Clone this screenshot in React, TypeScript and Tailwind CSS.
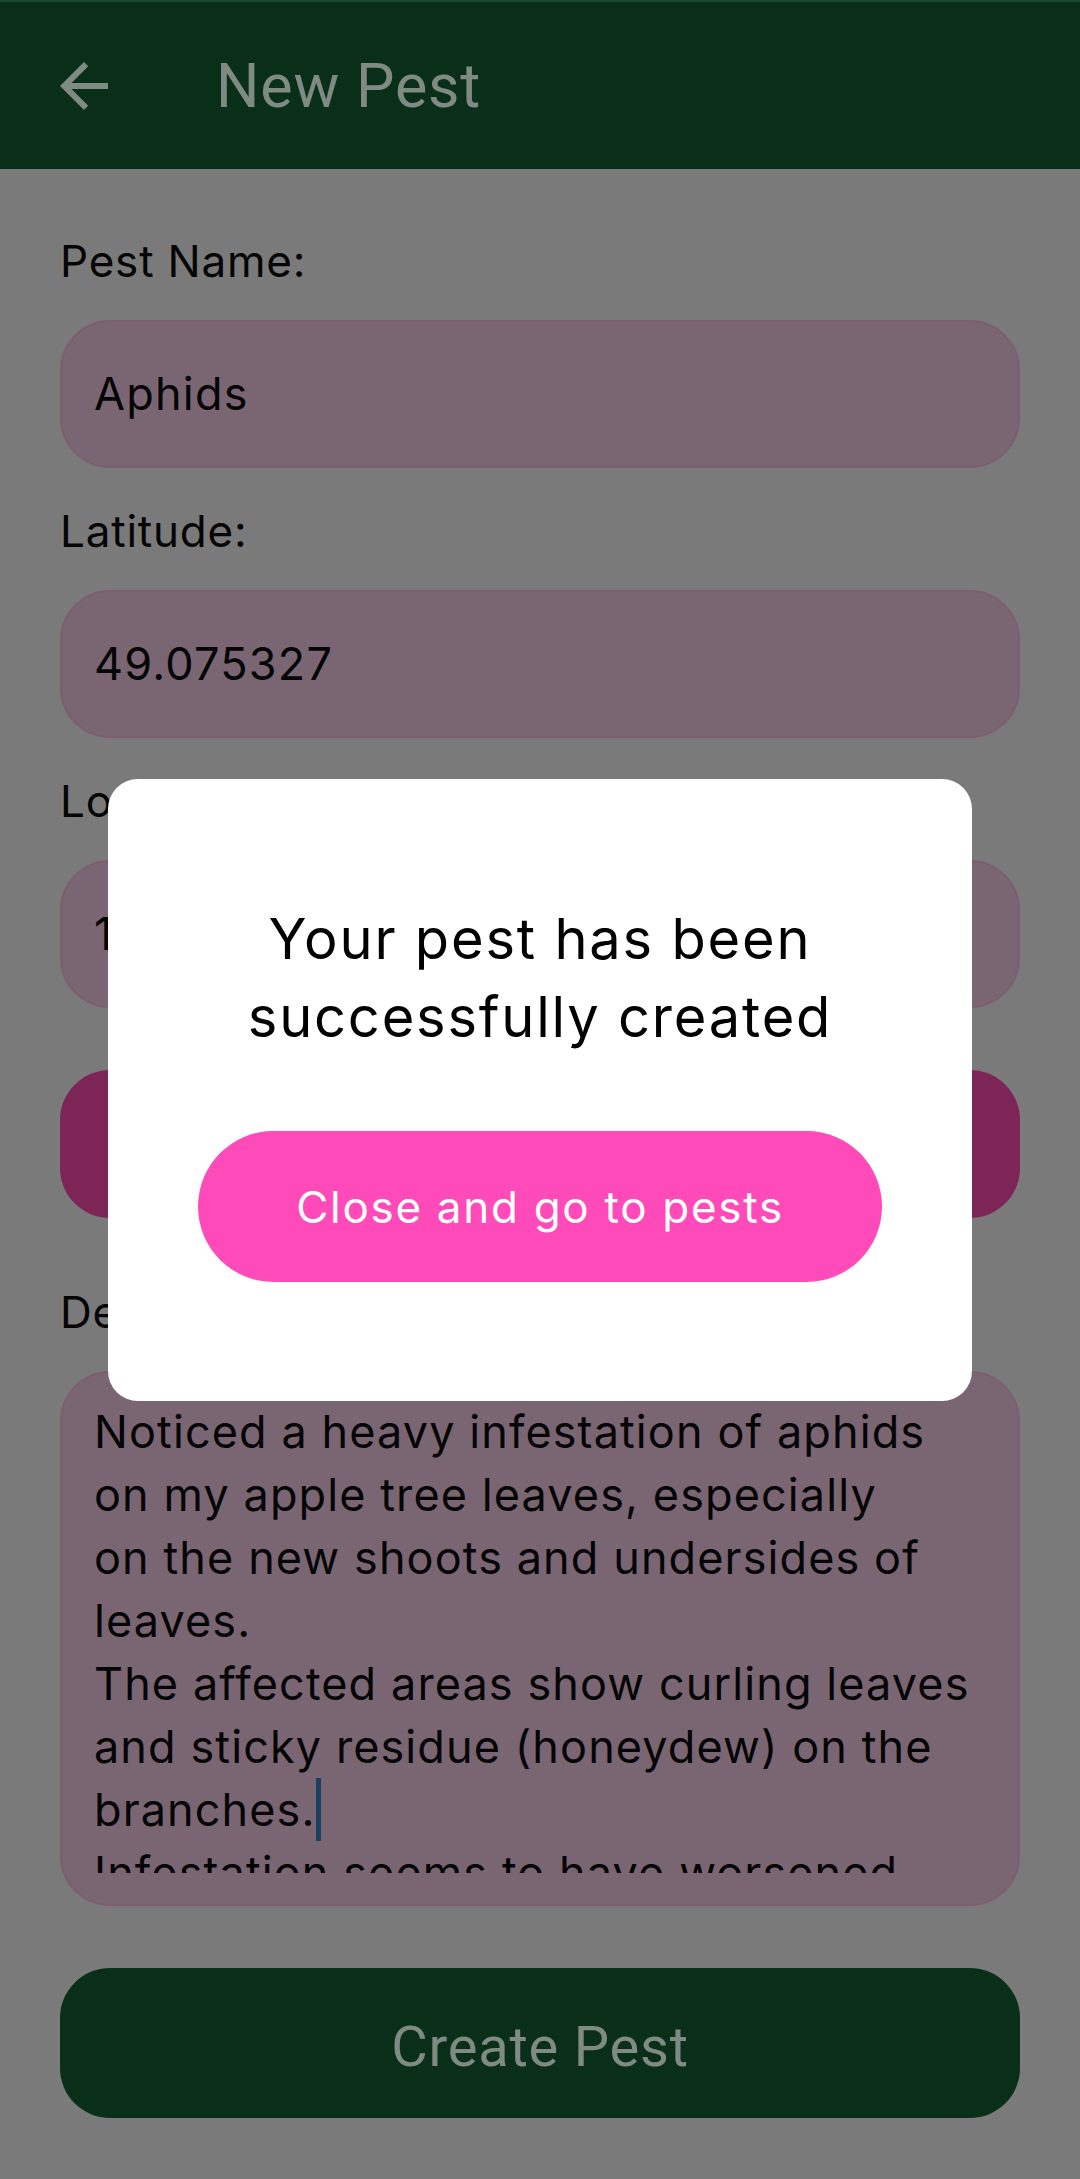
const body = '"Inter", "Liberation Sans", sans-serif'
const roboto = 'Roboto, "Liberation Sans", sans-serif'

function Label({ text }: { text: string }) {
  return (
    <div className="mb-[29px] h-[60px] text-[44px] leading-[60px] tracking-[0.8px] text-[#050505]">
      {text}
    </div>
  )
}

function Field({ value }: { value: string }) {
  return (
    <div className="mb-[33px] flex h-[148px] items-center rounded-[50px] border-2 border-[#7d5e6f] bg-[#7a6672] px-[32px] text-[45px] tracking-[1.2px] text-[#050505]">
      {value}
    </div>
  )
}

export default function App() {
  return (
    <div
      className="relative h-[2179px] w-[1080px] overflow-hidden bg-[#7a7a7a]"
      style={{ fontFamily: body }}
    >
      <header className="flex h-[169px] items-center border-t-2 border-[#1a4a2c] bg-[#0a2f19]">
        <button className="ml-[48px] flex h-[72px] w-[72px] items-center justify-center">
          <svg viewBox="0 0 24 24" width="72" height="72" fill="#7f8a83">
            <path d="M20 11H7.83l5.59-5.59L12 4l-8 8 8 8 1.41-1.41L7.83 13H20v-2z" />
          </svg>
        </button>
        <h1
          className="ml-[96px] text-[61px] leading-[70px] tracking-[0.8px] text-[#7f8a83]"
          style={{ fontFamily: roboto }}
        >
          New Pest
        </h1>
      </header>

      <main className="flex flex-col px-[60px] pt-[62px]">
        <Label text="Pest Name:" />
        <Field value="Aphids" />
        <Label text="Latitude:" />
        <Field value="49.075327" />
        <Label text="Longitude:" />
        <Field value="17.459813" />

        <button className="mt-[29px] h-[148px] rounded-[50px] bg-[#7e2558] text-[44px] text-[#7a7a7a]">
          Pick Location
        </button>

        <div className="mt-[64px]">
          <Label text="Description:" />
        </div>
        <div className="h-[535px] rounded-[50px] border-2 border-[#7d5e6f] bg-[#7a6672] px-[32px] pb-[31px] pt-[27px]">
          <div className="h-full overflow-hidden whitespace-pre text-[45px] leading-[63px] tracking-[1.1px] text-[#050505]">
            {'Noticed a heavy infestation of aphids\non my apple tree leaves, especially\non the new shoots and undersides of\nleaves.\nThe affected areas show curling leaves\nand sticky residue (honeydew) on the\nbranches.'}
            <span className="inline-block h-[63px] w-[5px] align-top bg-[#1b3f5e]" />
            {'\nInfestation seems to have worsened\nover the past week.'}
          </div>
        </div>

        <button
          className="mt-[62px] h-[150px] rounded-[50px] bg-[#0a2f19] pt-[8px] text-[56px] tracking-[0.8px] text-[#7f8a83]"
          style={{ fontFamily: roboto }}
        >
          Create Pest
        </button>
      </main>

      {/* success dialog over the dimmed form */}
      <div className="absolute left-[108px] top-[779px] flex h-[622px] w-[864px] flex-col items-center rounded-[30px] bg-white pt-[121px]">
        <p className="text-center text-[56px] leading-[78px] tracking-[1.8px] text-black">
          Your pest has been
          <br />
          successfully created
        </p>
        <button className="mt-[75px] h-[151px] w-[684px] rounded-full bg-[#ff4ab9] text-[44px] tracking-[1.7px] text-white">
          Close and go to pests
        </button>
      </div>
    </div>
  )
}
